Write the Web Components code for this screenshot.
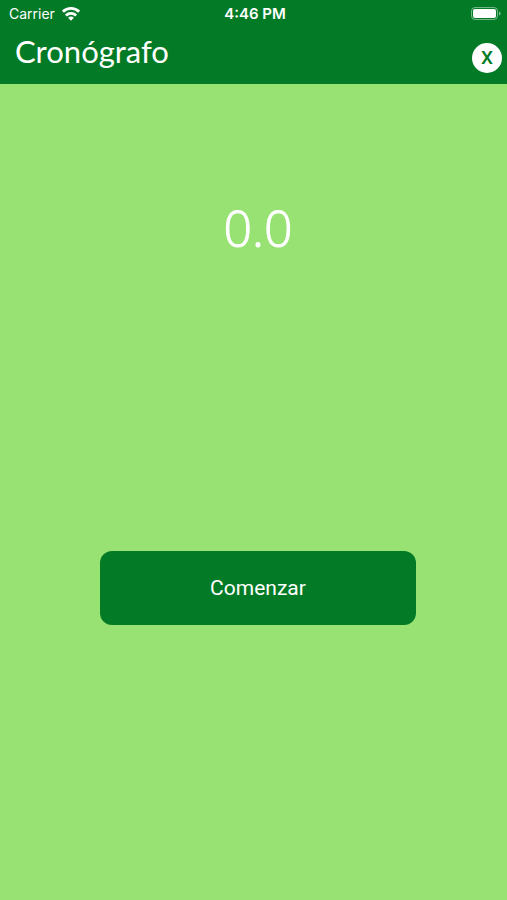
<!DOCTYPE html>
<html lang="es">
<head>
    <meta charset="UTF-8">
    <meta name="viewport" content="width=device-width, initial-scale=1">
    <title>Cronógrafo</title>
    <style>
        body{
            margin: 0;
            --primary-dark: #037b26;
            --primary-light: #97e272;
            font-family: Inter, "Liberation Sans", sans-serif;
            color: #fff;
        }
    </style>
</head>
<body>
    <crono-app>
        <crono-header>
            <status-bar slot="status" carrier="Carrier" time="4:46 PM"></status-bar>
            Cronógrafo
        </crono-header>
        <crono-timer>Comenzar</crono-timer>
    </crono-app>

    <script>
        class CronoApp extends HTMLElement{
            constructor(){
                super();
                this.attachShadow({mode:'open'})
            }

            connectedCallback(){
                this.shadowRoot.innerHTML=`
                <style>
                    :host{
                        display: flex;
                        flex-direction: column;
                        min-height: 100vh;
                        background: var(--primary-light);
                    }
                </style>
                <slot></slot>
                `
            }
        }

        class StatusBar extends HTMLElement{
            constructor(){
                super();
                this.attachShadow({mode:'open'})
            }

            connectedCallback(){
                const carrier = this.getAttribute('carrier')??''
                const time = this.getAttribute('time')??''

                this.shadowRoot.innerHTML=`
                <style>
                    :host{
                        display: grid;
                        grid-template-columns: 1fr auto 1fr;
                        align-items: center;
                        height: 28px;
                        padding: 0 6px 0 9px;
                        font-size: 14px;
                        line-height: 20px;
                    }
                    .carrier{
                        display: flex;
                        align-items: center;
                        gap: 7px;
                    }
                    .time{
                        font-weight: 600;
                        font-size: 15px;
                    }
                    .battery{
                        justify-self: end;
                    }
                    svg{
                        display: block;
                    }
                </style>
                <span class="carrier">
                    <span>${carrier}</span>
                    <svg width="18" height="14" viewBox="0 0 18 14" aria-hidden="true">
                        <g fill="none" stroke="#fff" stroke-width="2.8">
                            <path d="M0.9 4.7a11.6 11.6 0 0 1 16.2 0"/>
                            <path d="M3.9 8.4a7.3 7.3 0 0 1 10.2 0"/>
                        </g>
                        <path fill="#fff" d="M9 13.7l-2.9-2.9a4.2 4.2 0 0 1 5.8 0z"/>
                    </svg>
                </span>
                <span class="time">${time}</span>
                <svg class="battery" width="30" height="14" viewBox="0 0 30 14" aria-hidden="true">
                    <rect x="0.5" y="0.5" width="26" height="12" rx="3.5" fill="none" stroke="#fff" stroke-opacity="0.45"/>
                    <rect x="2" y="2" width="23" height="9" rx="2" fill="#fff"/>
                    <path fill="#fff" fill-opacity="0.5" d="M28 4.5c2.3 1 2.3 3 0 4z"/>
                </svg>
                `
            }
        }

        class CronoHeader extends HTMLElement{
            constructor(){
                super();
                this.attachShadow({mode:'open'})
            }

            connectedCallback(){
                this.shadowRoot.innerHTML=`
                <style>
                    :host{
                        display: block;
                        background: var(--primary-dark);
                    }
                    .bar{
                        display: flex;
                        justify-content: space-between;
                        align-items: flex-start;
                        height: 56px;
                        padding: 0 5px 0 15px;
                    }
                    h1{
                        margin: 3px 0 0;
                        font: 400 31px/40px Lato, "Open Sans", sans-serif;
                    }
                    button{
                        width: 30px;
                        height: 30px;
                        margin: 15px 0 0;
                        padding: 0;
                        border: 0;
                        border-radius: 100%;
                        background: #fff;
                        color: var(--primary-dark);
                        font: 500 19px/30px Roboto, sans-serif;
                        cursor: pointer;
                    }
                </style>
                <slot name="status"></slot>
                <div class="bar">
                    <h1><slot></slot></h1>
                    <button type="button">X</button>
                </div>
                `
            }
        }

        class CronoTimer extends HTMLElement{
            constructor(){
                super();
                this.attachShadow({mode:'open'})
                this.tenths = 0
                this.interval = null
            }

            toggle(){
                if(this.interval){
                    clearInterval(this.interval)
                    this.interval = null
                    return
                }
                const output = this.shadowRoot.querySelector('output')
                this.interval = setInterval(()=>{
                    this.tenths++
                    output.textContent = (this.tenths/10).toFixed(1)
                },100)
            }

            connectedCallback(){
                this.shadowRoot.innerHTML=`
                <style>
                    :host{
                        display: flex;
                        flex-direction: column;
                        align-items: center;
                        padding: 110px 0 40px 9px;
                    }
                    output{
                        font: 300 50px/68px "Open Sans", sans-serif;
                        -webkit-text-stroke: 1px currentColor;
                    }
                    button{
                        width: 63.5%;
                        height: 74px;
                        margin-top: 289px;
                        border: 0;
                        border-radius: 12px;
                        background: var(--primary-dark);
                        color: #fff;
                        font: 400 21px/28px Roboto, sans-serif;
                        cursor: pointer;
                    }
                </style>
                <output>0.0</output>
                <button type="button"><slot></slot></button>
                `
                this.shadowRoot.querySelector('button').addEventListener('click',()=>this.toggle())
            }

            disconnectedCallback(){
                clearInterval(this.interval)
            }
        }

        customElements.define('crono-app',CronoApp)
        customElements.define('status-bar',StatusBar)
        customElements.define('crono-header',CronoHeader)
        customElements.define('crono-timer',CronoTimer)
    </script>
</body>
</html>
